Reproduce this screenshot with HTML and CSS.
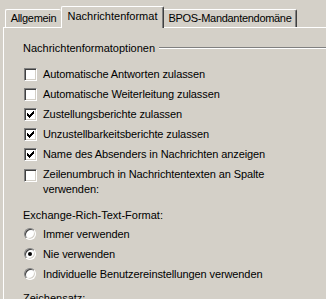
FILE: index.html
```html
<!DOCTYPE html>
<html lang="de">
<head>
<meta charset="utf-8">
<link rel="stylesheet" href="styles.css">
</head>
<body>
<div class="tabs">
  <div class="tab tab-first">Allgemein</div>
  <div class="tab active">Nachrichtenformat</div>
  <div class="tab tab-last">BPOS-Mandantendomäne</div>
</div>
<div class="panel">
  <div class="group-title"><span>Nachrichtenformatoptionen</span></div>
  <div class="checks">
    <div class="row"><span class="cb"></span><span class="lbl">Automatische Antworten zulassen</span></div>
    <div class="row"><span class="cb"></span><span class="lbl">Automatische Weiterleitung zulassen</span></div>
    <div class="row"><span class="cb checked"><svg width="13" height="13" viewBox="0 0 13 13" shape-rendering="crispEdges"><path d="M9 3h1v1H9zM8 4h2v1H8zM3 5h1v1H3zM7 5h3v1H7zM3 6h2v1H3zM6 6h3v1H6zM3 7h5v1H3zM4 8h3v1H4zM5 9h1v1H5z" fill="#000"/></svg></span><span class="lbl">Zustellungsberichte zulassen</span></div>
    <div class="row"><span class="cb checked"><svg width="13" height="13" viewBox="0 0 13 13" shape-rendering="crispEdges"><path d="M9 3h1v1H9zM8 4h2v1H8zM3 5h1v1H3zM7 5h3v1H7zM3 6h2v1H3zM6 6h3v1H6zM3 7h5v1H3zM4 8h3v1H4zM5 9h1v1H5z" fill="#000"/></svg></span><span class="lbl">Unzustellbarkeitsberichte zulassen</span></div>
    <div class="row"><span class="cb checked"><svg width="13" height="13" viewBox="0 0 13 13" shape-rendering="crispEdges"><path d="M9 3h1v1H9zM8 4h2v1H8zM3 5h1v1H3zM7 5h3v1H7zM3 6h2v1H3zM6 6h3v1H6zM3 7h5v1H3zM4 8h3v1H4zM5 9h1v1H5z" fill="#000"/></svg></span><span class="lbl">Name des Absenders in Nachrichten anzeigen</span></div>
    <div class="row row-multi"><span class="cb"></span><span class="lbl">Zeilenumbruch in Nachrichtentexten an Spalte<br>verwenden:</span></div>
  </div>
  <div class="label label-rtf">Exchange-Rich-Text-Format:</div>
  <div class="radios">
    <div class="row"><span class="rb"></span><span class="lbl">Immer verwenden</span></div>
    <div class="row"><span class="rb selected"></span><span class="lbl">Nie verwenden</span></div>
    <div class="row"><span class="rb"></span><span class="lbl">Individuelle Benutzereinstellungen verwenden</span></div>
  </div>
  <div class="label label-charset">Zeichensatz:</div>
</div>
</body>
</html>
```
FILE: styles.css
```css
html, body {
  margin: 0;
  padding: 0;
}
body {
  background: #d4d0c8;
  color: #000;
  font-family: "Liberation Sans", Arial, sans-serif;
  font-size: 11px;
  width: 326px;
  height: 299px;
  overflow: hidden;
}
.tabs {
  display: flex;
  align-items: flex-end;
  height: 27px;
  padding-left: 5px;
}
.tab {
  box-sizing: border-box;
  height: 18px;
  line-height: 17px;
  text-align: center;
  white-space: nowrap;
  border-top: 1px solid #fff;
  border-left: 1px solid #fff;
  border-right: 1px solid #404040;
  box-shadow: inset -1px 0 #808080;
  border-top-left-radius: 2px;
  border-top-right-radius: 2px;
}
.tab-first {
  width: 56px;
  border-right: none;
  box-shadow: none;
  letter-spacing: -0.3px;
}
.tab.active {
  width: 103px;
  height: 22px;
  line-height: 19px;
  margin-bottom: -1px;
  position: relative;
  z-index: 1;
  background: #d4d0c8;
}
.tab-last {
  width: 133px;
  border-left: none;
  border-top-left-radius: 0;
  letter-spacing: -0.3px;
}
.panel {
  margin-left: 3px;
  border-top: 1px solid #fff;
  border-left: 1px solid #fff;
  padding: 13px 0 0 19px;
  height: 300px;
}
.group-title {
  display: flex;
  align-items: center;
  height: 14px;
  line-height: 14px;
}
.group-title::after {
  content: "";
  flex: 1;
  margin-left: 4px;
  border-top: 1px solid #808080;
  border-bottom: 1px solid #fff;
}
.checks {
  margin-top: 9px;
}
.row {
  display: flex;
  align-items: flex-start;
  height: 20px;
}
.lbl {
  line-height: 14px;
  padding-top: 3px;
  white-space: nowrap;
  letter-spacing: -0.1px;
}
.cb {
  box-sizing: border-box;
  flex: none;
  width: 13px;
  height: 13px;
  margin: 4px 6px 0 1px;
  background: #fff;
  border-top: 1px solid #808080;
  border-left: 1px solid #808080;
  border-right: 1px solid #fff;
  border-bottom: 1px solid #fff;
  box-shadow: inset 1px 1px #404040, inset -1px -1px #d4d0c8;
  position: relative;
}
.cb svg {
  display: block;
  margin: -1px 0 0 -1px;
}
.row-multi {
  height: auto;
}
.row-multi .cb {
  margin-top: 5px;
}
.row-multi .lbl {
  line-height: 15px;
}
.label {
  height: 14px;
  line-height: 14px;
}
.label-rtf {
  margin-top: 11px;
}
.radios {
  margin-top: 2px;
}
.rb {
  box-sizing: border-box;
  flex: none;
  width: 12px;
  height: 12px;
  margin: 4px 7px 0 1px;
  border-radius: 50%;
  background: #fff;
  border-top: 1px solid #808080;
  border-left: 1px solid #808080;
  border-right: 1px solid #fff;
  border-bottom: 1px solid #fff;
  box-shadow: inset 1px 1px #404040, inset -1px -1px #d4d0c8;
  display: flex;
  align-items: center;
  justify-content: center;
}
.rb.selected::after {
  content: "";
  width: 4px;
  height: 4px;
  border-radius: 50%;
  background: #000;
}
.label-charset {
  margin-top: 7px;
}
```
